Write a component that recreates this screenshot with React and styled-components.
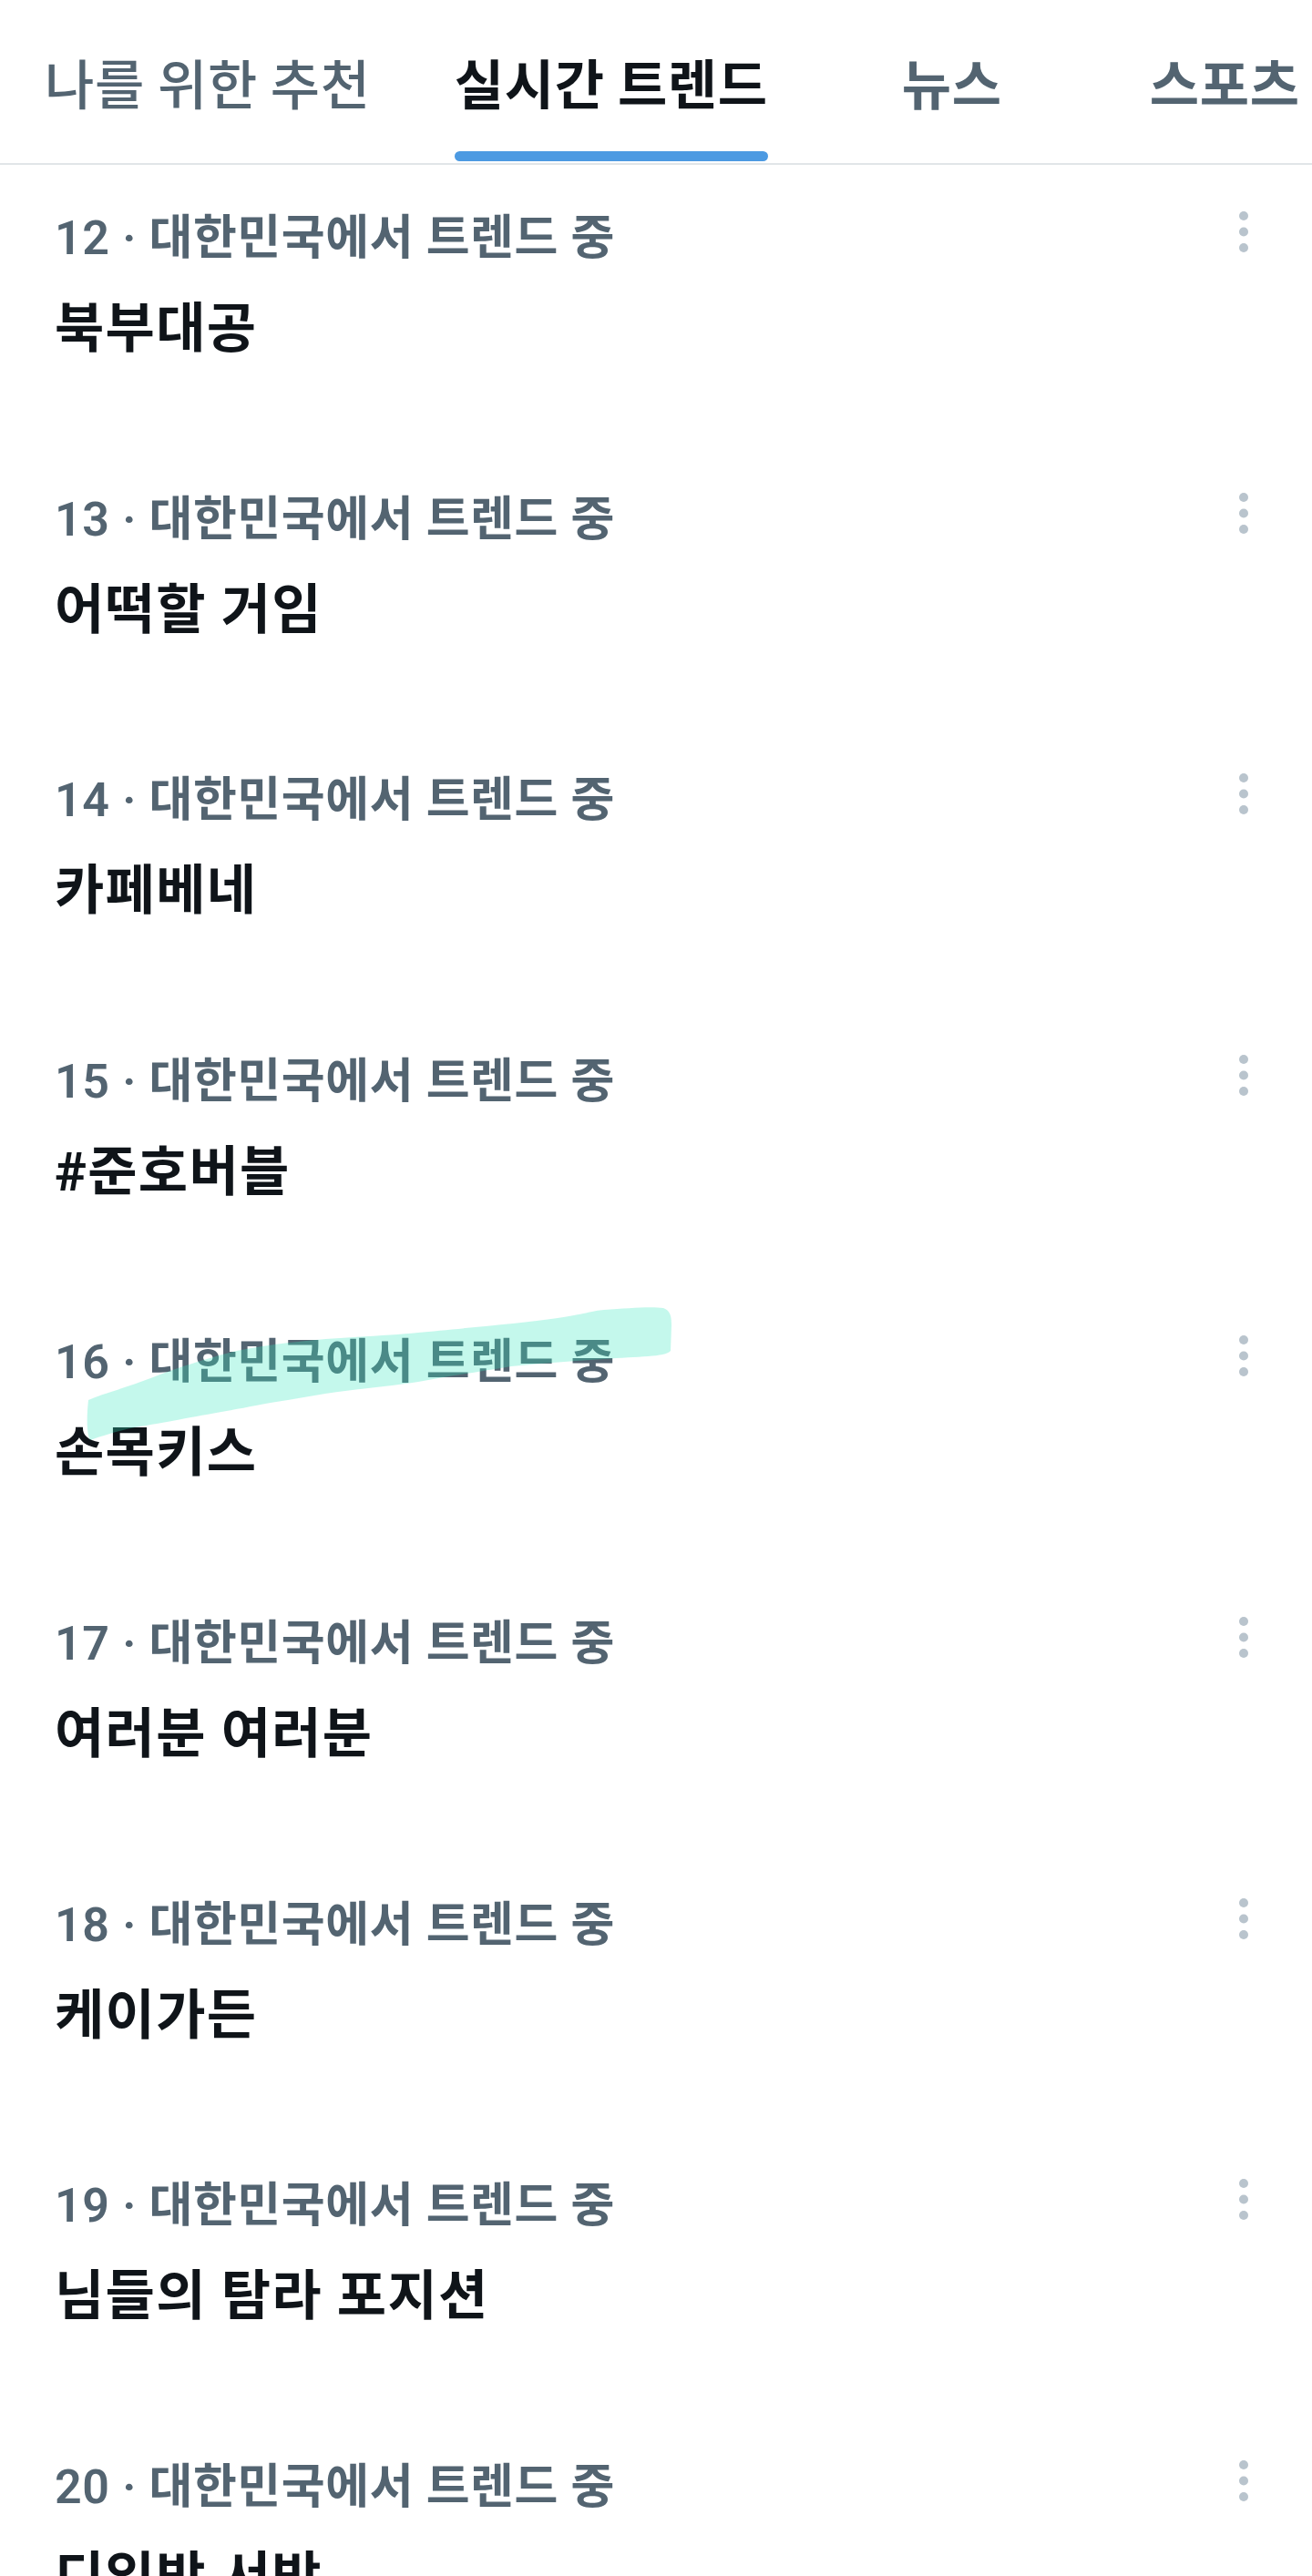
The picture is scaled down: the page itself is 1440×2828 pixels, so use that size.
import React from "react";
import styled, { createGlobalStyle } from "styled-components";

const GlobalStyle = createGlobalStyle`
body {
  margin: 0;
  background: #ffffff;
}
* {
  box-sizing: border-box;
}
`

const Page = styled.div`
width: 1440px;
height: 2828px;
overflow: hidden;
background: #ffffff;
font-family: Roboto, "Noto Sans CJK KR", "Noto Sans", sans-serif;
`

const TabBar = styled.nav`
display: flex;
height: 181px;
padding-left: 3px;
border-bottom: 2px solid #e1e5e8;
overflow: hidden;
`

const Tab = styled.div`
flex: 0 0 auto;
min-width: ${p => p.$min || 0}px;
padding: 62px 46px 0 46px;
display: flex;
justify-content: center;
`

const TabInner = styled.div`
display: flex;
flex-direction: column;
align-items: stretch;
`

const TabLabel = styled.span`
font-family: "Noto Sans CJK KR", sans-serif;
font-size: 59px;
line-height: 56px;
letter-spacing: 0.7px;
white-space: nowrap;
font-weight: ${p => p.$weight};
color: ${p => (p.$active ? "#0f1419" : "#536471")};
`

const Indicator = styled.div`
margin-top: 48px;
height: 11px;
border-radius: 6px;
background: ${p => (p.$active ? "#4c9ae2" : "transparent")};
`

const TrendRow = styled.div`
position: relative;
display: flex;
justify-content: space-between;
align-items: flex-start;
padding: 0 70px 100.6px 60px;
`

const TrendContent = styled.div`
display: flex;
flex-direction: column;
padding-top: 56px;
`

const TrendMeta = styled.div`
font-size: 52px;
line-height: 49px;
letter-spacing: 0.6px;
font-weight: 600;
color: #536471;
white-space: nowrap;
`

const TrendTitle = styled.div`
margin-top: 47px;
font-size: 59px;
line-height: 56px;
letter-spacing: 1.3px;
font-weight: 700;
color: #0f1419;
white-space: nowrap;
`

const MoreButton = styled.div`
margin-top: 51px;
width: 10px;
display: flex;
`

const Highlight = styled.svg`
position: absolute;
left: 0;
top: 0;
pointer-events: none;
`

const tabs = [
    { label: "나를 위한 추천", weight: 500 },
    { label: "실시간 트렌드", weight: 700, active: true },
    { label: "뉴스", weight: 700, min: 312 },
    { label: "스포츠", weight: 700, min: 287 },
]

const trends = [
    { rank: 12, title: "북부대공" },
    { rank: 13, title: "어떡할 거임" },
    { rank: 14, title: "카페베네" },
    { rank: 15, title: "#준호버블" },
    { rank: 16, title: "손목키스", marked: true },
    { rank: 17, title: "여러분 여러분" },
    { rank: 18, title: "케이가든" },
    { rank: 19, title: "님들의 탐라 포지션" },
    { rank: 20, title: "디입박 서박" },
]

const Dots = () => (
    <svg width="10" height="45" viewBox="0 0 10 45">
        <circle cx="5" cy="5" r="5" fill="#b9c4cd" />
        <circle cx="5" cy="22.5" r="5" fill="#b9c4cd" />
        <circle cx="5" cy="40" r="5" fill="#b9c4cd" />
    </svg>
)

// hand drawn marker stroke over row 16
const Marker = () => (
    <Highlight width="760" height="180" viewBox="0 0 760 180">
        <path
            d="M97 122 C110 116, 140 108, 168 97 C190 88, 240 72, 265 67 C300 60, 350 55, 388 53 C420 51, 440 50, 459 48 C500 44, 570 38, 612 32 C640 28, 650 24, 663 23 C690 21, 715 19, 728 21 C736 24, 737 30, 737 40 L736 68 C730 75, 700 74, 663 77 C620 80, 590 82, 561 85 C520 92, 490 96, 459 102 C420 108, 390 110, 357 115 C330 120, 300 124, 281 128 C250 134, 225 138, 204 142 C180 147, 165 149, 148 152 C125 157, 110 162, 99 166 C95 160, 95 140, 97 122 Z"
            fill="rgb(52, 231, 190)"
            fillOpacity="0.29"
        />
    </Highlight>
)

const App = () => {
    return (
        <Page>
            <GlobalStyle />
            <TabBar>
                {tabs.map(t => (
                    <Tab key={t.label} $min={t.min}>
                        <TabInner>
                            <TabLabel $active={t.active} $weight={t.weight}>{t.label}</TabLabel>
                            <Indicator $active={t.active} />
                        </TabInner>
                    </Tab>
                ))}
            </TabBar>
            {trends.map(t => (
                <TrendRow key={t.rank}>
                    <TrendContent>
                        <TrendMeta>{t.rank} · 대한민국에서 트렌드 중</TrendMeta>
                        <TrendTitle>{t.title}</TrendTitle>
                    </TrendContent>
                    <MoreButton><Dots /></MoreButton>
                    {t.marked && <Marker />}
                </TrendRow>
            ))}
        </Page>
    );
}

export default App;
